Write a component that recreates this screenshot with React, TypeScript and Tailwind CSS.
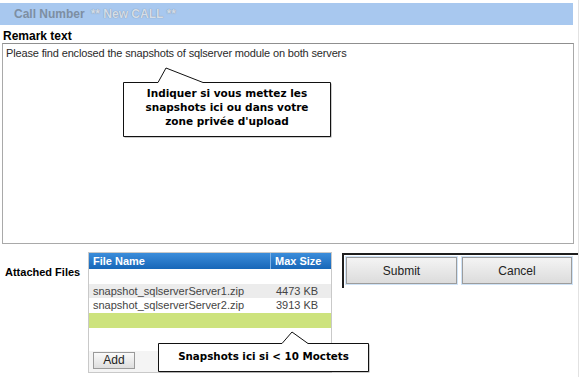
import React from 'react';

const files = [
  { name: 'snapshot_sqlserverServer1.zip', size: '4473 KB' },
  { name: 'snapshot_sqlserverServer2.zip', size: '3913 KB' },
];

const Callout: React.FC<{ points: string; children: React.ReactNode; className: string }> = ({ points, children, className }) => (
  <>
    <svg className="absolute left-0 top-0 pointer-events-none" width={581} height={377}>
      <polygon points={points} transform="translate(1,1)" fill="#9a9a9a" />
      <polygon points={points} fill="#ffffff" stroke="#111" strokeWidth={1} />
    </svg>
    <div className={`absolute text-center font-bold leading-[14px] text-black font-['DejaVu_Sans',sans-serif] ${className}`}>
      {children}
    </div>
  </>
);

const App: React.FC = () => {
  return (
    <div className="relative w-[581px] h-[377px] bg-white overflow-hidden font-['Liberation_Sans',Arial,sans-serif] text-black">
      {/* Call header */}
      <div className="mt-[3px] h-[22px] w-[573px] bg-[#a8c8ef] flex items-center pl-[14px] text-[12px] font-bold">
        <span className="text-[#7d8ea2]">Call Number</span>
        <span className="ml-[6px] text-[#d4dde8] [text-shadow:0_0_1px_#6f8299]">** New CALL **</span>
      </div>

      <div className="mt-[4px] pl-[3px] text-[12px] leading-[14px] font-bold">Remark text</div>

      {/* Remark box */}
      <div className="ml-[2px] w-[572px] h-[201px] border border-[#a9a9a9] border-t-[#8f8f8f] pt-[3px] pl-[3px] text-[11px] leading-[13px] tracking-[-0.15px] text-[#2a2a2a]">
        Please find enclosed the snapshots of sqlserver module on both servers
      </div>

      {/* Attachments + actions */}
      <div className="mt-[8px] flex">
        <div className="w-[88px] pl-[5px] pt-[12px] text-[11px] font-bold">Attached Files</div>

        <div className="w-[244px] h-[121px] border border-[#c9c9c9] flex flex-col text-[11px]">
          <div className="h-[16px] flex bg-gradient-to-b from-[#3b8ddb] to-[#1767b8] text-white font-bold">
            <div className="w-[182px] pl-[4px] leading-[16px] border-r border-[#7fb2e6]">File Name</div>
            <div className="flex-1 pl-[4px] leading-[16px]">Max Size</div>
          </div>
          <div className="h-[15px]" />
          {files.map((f, i) => (
            <div key={f.name} className={`h-[14px] flex leading-[14px] text-[#444] ${i === 0 ? 'bg-[#ececec]' : 'bg-white'}`}>
              <div className="w-[182px] pl-[4px]">{f.name}</div>
              <div className="flex-1 pl-[5px]">{f.size}</div>
            </div>
          ))}
          <div className="h-[15px] mt-[1px] bg-[#cde37d]" />
          <div className="flex-1" />
          <div className="h-[21px] bg-[#f4f4f4] pl-[4px] pt-[1px]">
            <button className="w-[42px] h-[17px] border border-[#9a9a9a] bg-gradient-to-b from-[#fafafa] to-[#dedede] text-[12px] text-[#222] leading-[15px]">
              Add
            </button>
          </div>
        </div>

        <div className="ml-[10px] mt-[1px] w-[236px] h-[35px] border-t-2 border-l-2 border-[#1e1e1e] flex gap-[5px] pl-[2px] pt-[2px]">
          <button className="w-[111px] h-[27px] border border-[#9c9c9c] outline outline-1 outline-[#cfe3f7] bg-gradient-to-b from-[#f4f4f4] to-[#dcdcdc] text-[12px] text-[#222]">
            Submit
          </button>
          <button className="w-[110px] h-[27px] border border-[#9c9c9c] outline outline-1 outline-[#cfe3f7] bg-gradient-to-b from-[#f4f4f4] to-[#dcdcdc] text-[12px] text-[#222]">
            Cancel
          </button>
        </div>
      </div>

      <div className="absolute right-[2px] top-0 h-full w-px bg-[#e2e2e2]" />

      <Callout
        points="123.5,82.5 158,82.5 166,68 203,82.5 330.5,82.5 330.5,136.5 123.5,136.5"
        className="left-[124px] top-[86px] w-[206px] text-[10.5px]"
      >
        Indiquer si vous mettez les<br />
        snapshots ici ou dans votre<br />
        zone privée d'upload
      </Callout>

      <Callout
        points="158.5,343.5 282,343.5 292,332 308,343.5 368.5,343.5 368.5,371.5 158.5,371.5"
        className="left-[159px] top-[349px] w-[209px] text-[10.3px]"
      >
        Snapshots ici si &lt; 10 Moctets
      </Callout>
    </div>
  );
};

export default App;
